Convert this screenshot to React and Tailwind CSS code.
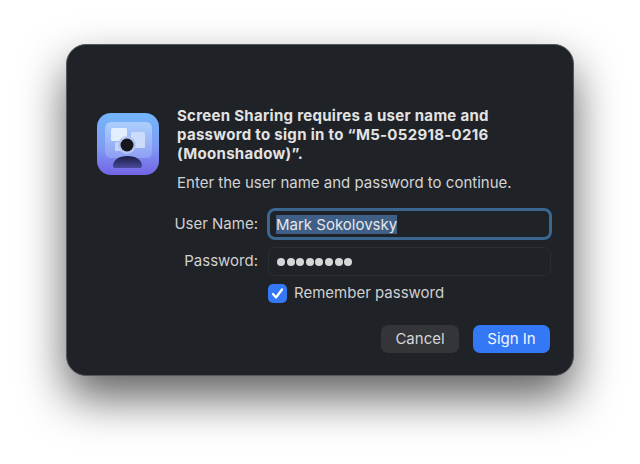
// Screen Sharing sign-in sheet
function AppIcon() {
  return (
    <svg width="62" height="62" viewBox="0 0 62 62" className="shrink-0">
      <defs>
        <linearGradient id="tile" x1="0" y1="0" x2="0" y2="1">
          <stop offset="0" stopColor="#73b6fb" />
          <stop offset="0.55" stopColor="#7f9bf5" />
          <stop offset="1" stopColor="#7463e6" />
        </linearGradient>
        <linearGradient id="screen" x1="0" y1="0" x2="0" y2="1">
          <stop offset="0" stopColor="#abd0fc" />
          <stop offset="1" stopColor="#8f9ff3" />
        </linearGradient>
        <linearGradient id="body" x1="0" y1="0" x2="0" y2="1">
          <stop offset="0" stopColor="#1c1d45" />
          <stop offset="1" stopColor="#4a4a9c" />
        </linearGradient>
        <filter id="soft" x="-20%" y="-20%" width="140%" height="140%">
          <feGaussianBlur stdDeviation="0.5" />
        </filter>
      </defs>
      <rect width="62" height="62" rx="14" fill="url(#tile)" />
      <g filter="url(#soft)">
        <rect x="8" y="9" width="47" height="36" rx="6" fill="url(#screen)" />
        <rect x="14" y="15" width="16" height="13" rx="1.5" fill="#e4effe" />
        <rect x="34" y="19" width="14" height="16" rx="1.5" fill="#cbdcfb" />
        <rect x="18" y="29" width="12" height="9" rx="1.5" fill="#c6d8fa" />
        <circle cx="30" cy="32" r="9" fill="#b4c4f4" />
        <circle cx="30" cy="32" r="6.5" fill="#14141c" />
        <path d="M16 53c0-6 6-10 14.500-10S45 47 45 53c0 1-1 2-2 2H18c-1 0-2-1-2-2z" fill="url(#body)" />
      </g>
    </svg>
  );
}

export default function App() {
  return (
    <div
      className="w-[640px] h-[464px] overflow-hidden bg-white pl-[66px] pt-[44px] text-[15px]"
      style={{ fontFamily: "Inter, 'Liberation Sans', sans-serif" }}
    >
      <div className="w-[508px] h-[332px] rounded-[20px] bg-[#1f2227] border border-[#55575a] shadow-[0_22px_46px_rgba(0,0,0,0.62)] pl-[30px] pr-[23px] pt-[68px] flex gap-[18px]">
        <AppIcon />
        <div className="flex-1 min-w-0 -mt-[7px]">
          <p className="font-bold text-[#e3e3e4] leading-[19px] text-[15px] tracking-[0.3px] whitespace-nowrap">
            Screen Sharing requires a user name and
            <br />
            password to sign in to “M5-052918-0216
            <br />
            (Moonshadow)”.
          </p>
          <p className="mt-[10px] text-[#d3d4d5] leading-[19px] whitespace-nowrap">Enter the user name and password to continue.</p>

          <div className="mt-[16px] -ml-[10px] -mr-[2px] grid grid-cols-[91px_1fr] gap-x-[9px] gap-y-[7px] items-center text-[#cfd0d1]">
            <span className="text-right">User Name:</span>
            <div className="h-[32px] rounded-[8px] border-[3px] border-[#3a6690] flex items-center pl-[6px]">
              <span className="bg-[#3f5f86] text-[#e6e7e8] leading-[19px]">Mark Sokolovsky</span>
            </div>
            <span className="text-right">Password:</span>
            <div className="h-[29px] mx-[1px] rounded-[7px] border border-[#2a2d32] flex items-center pl-[8px] gap-[1.600px]">
              {[0, 1, 2, 3, 4, 5, 6, 7].map((i) => (
                <span key={i} className="w-[8px] h-[8px] rounded-full bg-[#d6d6d7]" />
              ))}
            </div>
            <span />
            <label className="flex items-center gap-[7px] -mt-[1px] ml-[1px]">
              <span className="w-[19px] h-[19px] rounded-[5px] bg-[#3478f6] flex items-center justify-center">
                <svg width="13" height="13" viewBox="0 0 13 13" fill="none">
                  <path d="M2 7l3 3.500L11 2.500" stroke="#fff" strokeWidth="2.200" strokeLinecap="round" strokeLinejoin="round" />
                </svg>
              </span>
              <span>Remember password</span>
            </label>
          </div>

          <div className="mt-[20px] flex justify-end gap-[14px]">
            <button className="w-[78px] h-[28px] pt-[2px] rounded-[7px] bg-[#333539] text-[#d5d6d7]">Cancel</button>
            <button className="w-[77px] h-[28px] pt-[2px] rounded-[7px] bg-[#3478f6] text-[#f2f6fe]">Sign In</button>
          </div>
        </div>
      </div>
    </div>
  );
}
